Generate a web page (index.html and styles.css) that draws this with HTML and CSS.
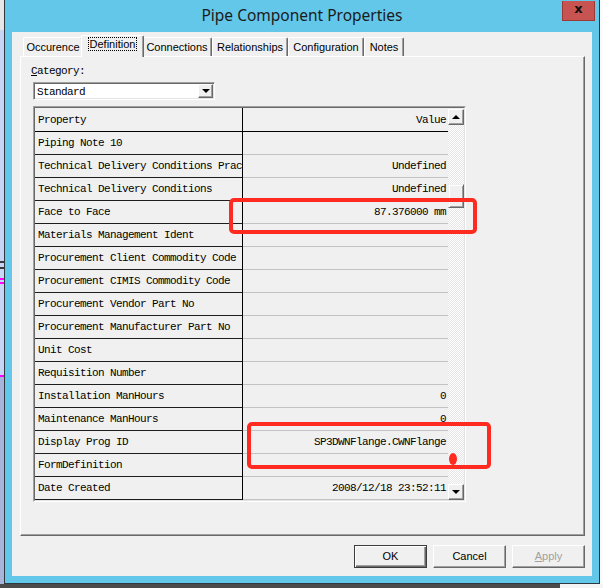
FILE: index.html
```html
<!DOCTYPE html>
<html lang="en">
<head>
<meta charset="utf-8">
<title>Pipe Component Properties</title>
<link rel="stylesheet" href="styles.css">
</head>
<body>
<div class="window">
  <div class="titlebar">
    <span class="title">Pipe Component Properties</span>
    <span class="close">x</span>
  </div>
  <div class="client">
    <div class="tabs">
      <div class="tab t-occ">Occurence</div>
      <div class="tab t-def active"><span class="focus">Definition</span></div>
      <div class="tab t-con">Connections</div>
      <div class="tab t-rel">Relationships</div>
      <div class="tab t-cfg">Configuration</div>
      <div class="tab t-not">Notes</div>
    </div>
    <div class="panel">
      <div class="label mono"><u>C</u>ategory:</div>
      <div class="combo mono">
        <span class="combo-text">Standard</span>
        <span class="combo-btn"><span class="tri-down"></span></span>
      </div>
      <div class="grid">
        <div class="grid-inner">
          <div class="rows mono">
            <div class="row head"><div class="name">Property</div><div class="val">Value</div></div>
            <div class="row"><div class="name">Piping Note 10</div><div class="val"></div></div>
            <div class="row"><div class="name">Technical Delivery Conditions Prac</div><div class="val">Undefined</div></div>
            <div class="row"><div class="name">Technical Delivery Conditions</div><div class="val">Undefined</div></div>
            <div class="row"><div class="name">Face to Face</div><div class="val">87.376000 mm</div></div>
            <div class="row"><div class="name">Materials Management Ident</div><div class="val"></div></div>
            <div class="row"><div class="name">Procurement Client Commodity Code</div><div class="val"></div></div>
            <div class="row"><div class="name">Procurement CIMIS Commodity Code</div><div class="val"></div></div>
            <div class="row"><div class="name">Procurement Vendor Part No</div><div class="val"></div></div>
            <div class="row"><div class="name">Procurement Manufacturer Part No</div><div class="val"></div></div>
            <div class="row"><div class="name">Unit Cost</div><div class="val"></div></div>
            <div class="row"><div class="name">Requisition Number</div><div class="val"></div></div>
            <div class="row"><div class="name">Installation ManHours</div><div class="val">0</div></div>
            <div class="row"><div class="name">Maintenance ManHours</div><div class="val">0</div></div>
            <div class="row"><div class="name">Display Prog ID</div><div class="val">SP3DWNFlange.CWNFlange</div></div>
            <div class="row"><div class="name">FormDefinition</div><div class="val"></div></div>
            <div class="row"><div class="name">Date Created</div><div class="val">2008/12/18 23:52:11</div></div>
          </div>
          <div class="vscroll">
            <div class="sb-btn"><span class="tri-up"></span></div>
            <div class="sb-track"><div class="sb-thumb"></div></div>
            <div class="sb-btn"><span class="tri-down"></span></div>
          </div>
        </div>
      </div>
    </div>
    <div class="buttons">
      <div class="btn default">OK</div>
      <div class="btn">Cancel</div>
      <div class="btn disabled"><u>A</u>pply</div>
    </div>
  </div>
</div>
<div class="mark mark-face"></div>
<div class="mark mark-prog"></div>
<div class="dot"></div>
</body>
</html>
```

FILE: styles.css
```css
* { box-sizing: border-box; }

html, body { margin: 0; }

body {
  width: 603px;
  height: 588px;
  overflow: hidden;
  position: relative;
  font-family: "Liberation Sans", Arial, sans-serif;
  font-size: 11px;
  color: #000;
  background:
    linear-gradient(to bottom,
      #e6e6e6 0 30px, #c9d5f5 30px 261px, #3a3a3a 261px 263px,
      #c9d5f5 263px 267px, #3a3a3a 267px 269px, #c9d5f5 269px 278px,
      #ff00ff 278px 280px, #c9d5f5 280px 282px, #ff00ff 282px 284px,
      #c9d5f5 284px 375px, #ff00ff 375px 377px, #a8b4d9 377px) 0 0 / 4px 584px no-repeat,
    linear-gradient(#fbfbfb, #fbfbfb) 600px 0 / 3px 584px no-repeat,
    linear-gradient(#f4f4f4, #f4f4f4) 560px 584px / 43px 4px no-repeat,
    #4b4b4b;
}

.mono {
  font-family: "Liberation Mono", "Courier New", monospace;
  font-size: 11px;
  letter-spacing: -0.6px;
}

/* window frame */
.window {
  position: absolute;
  left: 4px;
  top: -1px;
  width: 596px;
  height: 585px;
  border: 1px solid #2c3a40;
  background: #63c7e9;
  padding: 0 7px 7px 7px;
  display: flex;
  flex-direction: column;
}

.titlebar {
  height: 32px;
  flex: none;
  display: flex;
  align-items: center;
  justify-content: center;
  padding-bottom: 3px;
  position: relative;
}

.title {
  font-family: "Noto Sans", "Open Sans", sans-serif;
  font-size: 15.5px;
  color: #1b1b1b;
}

.close {
  position: absolute;
  top: 1px;
  right: -3px;
  width: 33px;
  height: 20px;
  background: #c75450;
  border: 1px solid #9c3a36;
  border-top: none;
  font-family: "DejaVu Sans", sans-serif;
  font-weight: bold;
  font-size: 13px;
  line-height: 16px;
  text-align: center;
  color: #111;
}

.client {
  flex: 1;
  background: #f0f0f0;
  display: flex;
  flex-direction: column;
  padding: 0 7px 8px 8px;
}

/* tab strip */
.tabs {
  height: 24px;
  flex: none;
  padding: 3px 0 0 3px;
  display: flex;
  align-items: flex-end;
}

.tab {
  height: 19px;
  padding: 0;
  text-align: center;
  line-height: 18px;
  border: 1px solid;
  border-color: #fff #696969 transparent #fff;
  border-bottom: none;
  border-radius: 2px 2px 0 0;
  box-shadow: inset -1px 0 #a0a0a0;
  white-space: nowrap;
}

.t-occ { width: 60px; }
.t-def { width: 63px; }
.t-con { width: 70px; }
.t-rel { width: 76px; }
.t-cfg { width: 76px; }
.t-not { width: 40px; }

.tab.active {
  height: 22px;
  margin: 0 -2px -1px -2px;
  line-height: 17px;
  background: #f0f0f0;
  position: relative;
  z-index: 2;
}

.focus {
  outline: 1px dotted #000;
  outline-offset: 0;
  padding: 0 1px;
}

.panel {
  height: 480px;
  flex: none;
  border: 1px solid;
  border-color: #fff #696969 #696969 #fff;
  box-shadow: inset -1px -1px #a0a0a0;
  padding: 8px 0 0 10px;
}

.label {
  height: 13px;
  line-height: 13px;
}

.combo {
  margin: 4px 0 0 2px;
  width: 182px;
  height: 18px;
  background: #fff;
  border: 1px solid;
  border-color: #a0a0a0 #fff #fff #a0a0a0;
  box-shadow: inset 1px 1px #696969, inset -1px -1px #e3e3e3;
  display: flex;
  align-items: center;
  padding: 0 1px 0 3px;
}

.combo-text {
  flex: 1;
  line-height: 14px;
  padding-top: 1px;
}

.combo-btn {
  width: 15px;
  height: 14px;
  background: #f0f0f0;
  border: 1px solid;
  border-color: #fff #696969 #696969 #fff;
  box-shadow: inset -1px -1px #a0a0a0;
  display: flex;
  align-items: center;
  justify-content: center;
}

.tri-down {
  width: 0;
  height: 0;
  border-left: 4px solid transparent;
  border-right: 4px solid transparent;
  border-top: 4px solid #000;
}

.tri-up {
  width: 0;
  height: 0;
  border-left: 4px solid transparent;
  border-right: 4px solid transparent;
  border-bottom: 4px solid #000;
}

/* property grid */
.grid {
  margin: 6px 0 0 2px;
  width: 433px;
  height: 396px;
  border: 1px solid;
  border-color: #a0a0a0 #fff #fff #a0a0a0;
}

.grid-inner {
  height: 100%;
  border: 1px solid;
  border-color: #696969 #e3e3e3 #e3e3e3 #696969;
  display: flex;
}

.rows {
  width: 413px;
  display: flex;
  flex-direction: column;
}

.row {
  height: 23px;
  display: flex;
}

.row.head { height: 24px; }

.name {
  width: 208px;
  padding: 1px 0 0 3px;
  border-right: 1px solid #000;
  border-bottom: 1px solid #1e1e1e;
  white-space: nowrap;
  overflow: hidden;
  line-height: 21px;
}

.val {
  width: 205px;
  padding: 1px 2px 0 0;
  text-align: right;
  border-bottom: 1px solid #c3c3c3;
  white-space: nowrap;
  overflow: hidden;
  line-height: 21px;
}

.head .name,
.head .val {
  border-bottom-color: #000;
  line-height: 22px;
}

.vscroll {
  width: 16px;
  display: flex;
  flex-direction: column;
  padding-top: 1px;
}

.sb-btn {
  width: 16px;
  height: 16px;
  flex: none;
  background: #f0f0f0;
  border: 1px solid;
  border-color: #fff #696969 #696969 #fff;
  box-shadow: inset -1px -1px #a0a0a0;
  display: flex;
  align-items: center;
  justify-content: center;
}

.sb-track {
  flex: 1;
  padding-top: 59px;
  background: repeating-conic-gradient(#fdfdfd 0 25%, #e6e6e6 0 50%) 0 0 / 2px 2px;
}

.sb-thumb {
  height: 24px;
  background: #f0f0f0;
  border: 1px solid;
  border-color: #f0f0f0 #696969 #696969 #f0f0f0;
  box-shadow: inset 1px 1px #fff, inset -1px -1px #a0a0a0;
}

/* dialog buttons */
.buttons {
  margin-top: 9px;
  height: 23px;
  display: flex;
  justify-content: flex-end;
  gap: 6px;
}

.btn {
  width: 73px;
  height: 23px;
  border: 1px solid;
  border-color: #fff #696969 #696969 #fff;
  box-shadow: inset -1px -1px #a0a0a0;
  background: #f0f0f0;
  text-align: center;
  line-height: 20px;
}

.btn.default {
  border-color: #3c3c3c;
  box-shadow: inset 1px 1px #fff, inset -1px -1px #696969, inset -2px -2px #a0a0a0;
}

.btn.disabled { color: #a0a0a0; }

/* red annotation marks */
.mark {
  position: absolute;
  border: 4px solid #ff2a20;
  border-radius: 5px;
}

.mark-face { left: 229px; top: 198px; width: 248px; height: 36px; }
.mark-prog { left: 247px; top: 422px; width: 244px; height: 47px; }

.dot {
  position: absolute;
  left: 449px;
  top: 453px;
  width: 8px;
  height: 12px;
  border-radius: 50%;
  background: #ff2a20;
}
```
